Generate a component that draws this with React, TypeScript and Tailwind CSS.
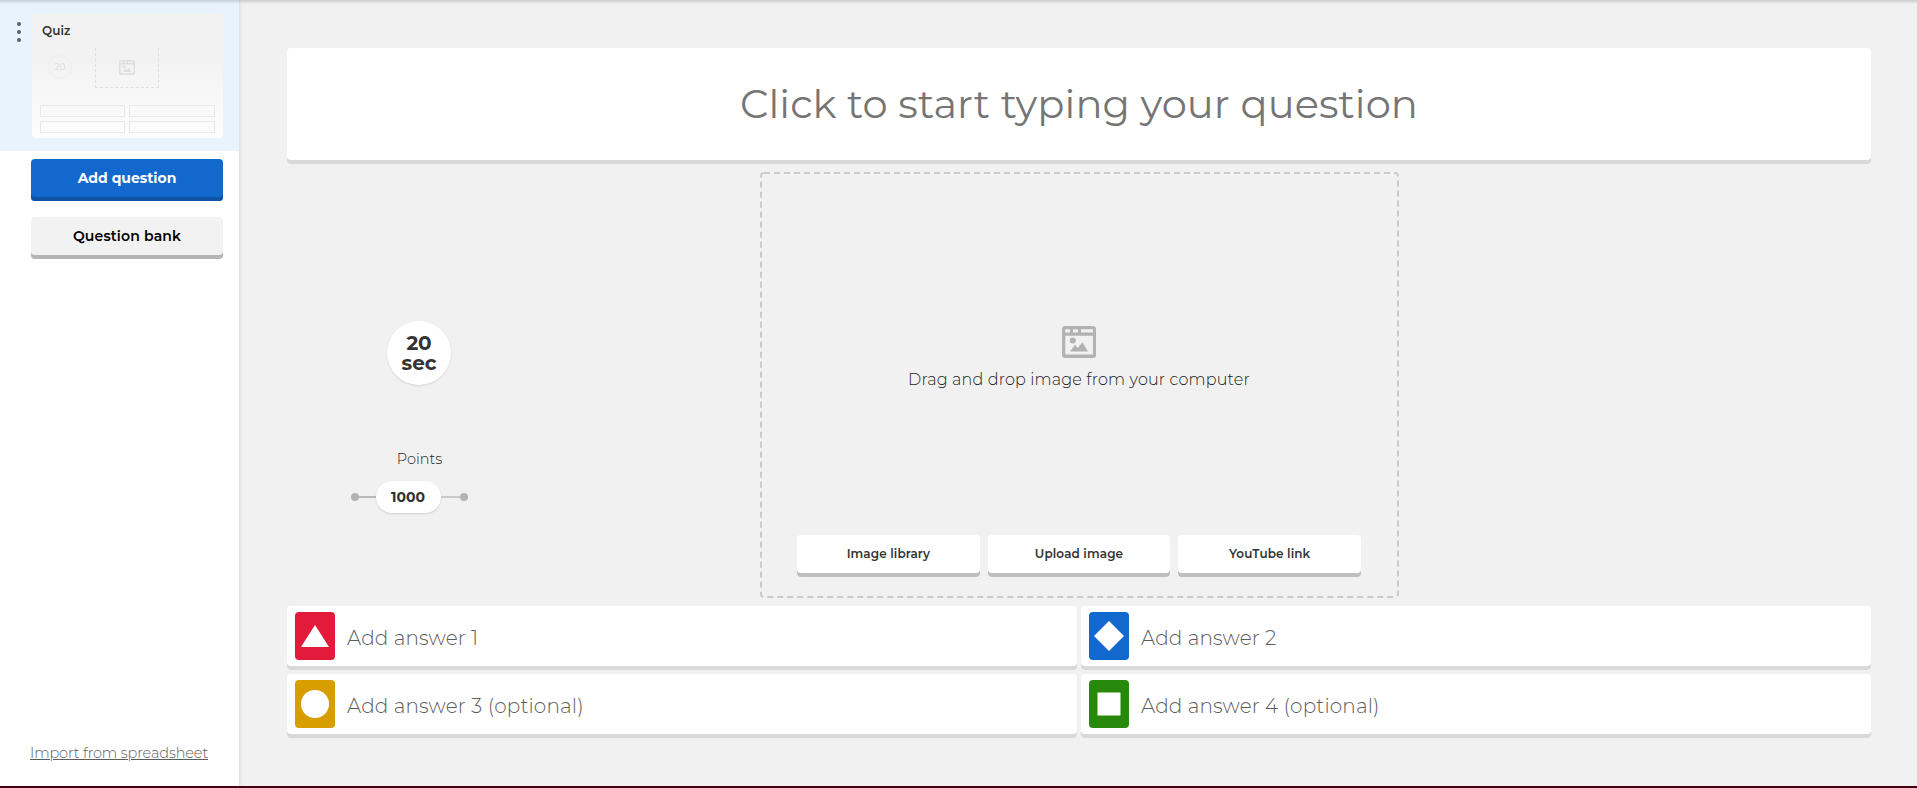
import React from 'react';

function DotsIcon() {
  return (
    <svg className="block h-[22px] w-[6px] fill-[#555f68]" viewBox="0 0 6 22">
      <circle cx="3" cy="3" r="2" />
      <circle cx="3" cy="11" r="2" />
      <circle cx="3" cy="19" r="2" />
    </svg>
  );
}

function ImageIcon({ className }: { className: string }) {
  return (
    <svg className={className} viewBox="0 0 34 32" fill="currentColor">
      <path
        fillRule="evenodd"
        d="M3 0H31Q34 0 34 3V29Q34 32 31 32H3Q0 32 0 29V3Q0 0 3 0ZM3.3 3.2V6.5H8V3.2ZM11 3.2V6.5H16V3.2ZM19 3.2V6.5H31V3.2ZM3.3 9.8V28.5H31V9.8Z"
      />
      <circle cx="10.8" cy="14.6" r="3" />
      <path d="M8 25.5L13 18.8L15.8 22L20.5 16.3L26 25.5Z" />
    </svg>
  );
}

function Thumbnail() {
  return (
    <div className="h-[125px] w-[191px] rounded bg-linear-to-b from-[#f2f2f2] from-35% to-[#fdfdfd] px-2">
      <div className="flex h-[35px] items-center pl-[2px] text-[12px] font-semibold text-[#333333]">
        <span className="tracking-[0.1px]">Quiz</span>
      </div>
      <div className="flex h-[40px]">
        <div className="mt-[7px] ml-2 flex size-[24px] items-center justify-center rounded-full border border-[#eeeeee] text-[9px] text-[#d9d9d9]">
          20
        </div>
        <div className="ml-[23px] flex w-[64px] justify-center border-x border-b border-dashed border-[#dedede]">
          <ImageIcon className="mt-[12px] h-[15px] w-4 text-[#dedede]" />
        </div>
      </div>
      <div className="mt-[17px] grid grid-cols-[85px_86px] gap-x-1 gap-y-1">
        {[0, 1, 2, 3].map((i) => (
          <div key={i} className="h-3 border border-[#e9e9e9]" />
        ))}
      </div>
    </div>
  );
}

function Sidebar() {
  return (
    <aside className="flex w-[240px] shrink-0 flex-col border-r border-[#e2e2e2] bg-white shadow-[1px_0_3px_rgba(0,0,0,0.06)]">
      <div className="flex h-[151px] bg-[#e9f3fd] pt-[13px]">
        <div className="mt-[8px] ml-4 w-4">
          <DotsIcon />
        </div>
        <Thumbnail />
      </div>
      <div className="flex flex-col gap-4 pt-2 pr-4 pl-[31px]">
        <button className="h-[42px] rounded bg-[#1368ce] pb-1 text-[14px] font-bold text-white shadow-[inset_0_-4px_0_#0f53a5]">
          Add question
        </button>
        <button className="h-[42px] rounded bg-[#f2f2f2] pb-1 text-[14px] font-semibold text-black shadow-[inset_0_-4px_0_#b5b5b5]">
          <span className="tracking-[0.15px]">Question bank</span>
        </button>
      </div>
      <div className="mt-auto mb-[23px] ml-[30px] text-[14.5px] leading-5 font-light text-[#5c5c5c]">
        <span className="tracking-[-0.13px] underline">Import from spreadsheet</span>
      </div>
    </aside>
  );
}

function Settings() {
  return (
    <div className="flex w-[473px] flex-col items-center pr-[209px]">
      <div className="mt-[149px] flex size-16 items-center justify-center rounded-full bg-white text-center text-[20px] leading-5 font-bold text-[#333333] shadow-[0_1px_2px_rgba(0,0,0,0.12)]">
        <div className="tracking-[-0.1px]">
          20
          <br />
          sec
        </div>
      </div>
      <div className="mt-[64px] ml-px text-[14.5px] leading-5 font-light text-[#222222]">
        <span>Points</span>
      </div>
      <div className="mt-[12px] mr-[20px] flex items-center">
        <span className="size-2 rounded-full bg-[#b2b2b2]" />
        <span className="h-[2px] w-[17px] bg-[#b9b9b9]" />
        <span className="flex h-8 w-[65px] items-center justify-center rounded-full bg-white text-[14px] font-bold text-[#333333] shadow-[0_1px_2px_rgba(0,0,0,0.15)]">
          1000
        </span>
        <span className="h-[2px] w-[19px] bg-[#c9c9c9]" />
        <span className="size-2 rounded-full bg-[#b2b2b2]" />
      </div>
    </div>
  );
}

function MediaDropZone() {
  return (
    <div className="flex h-[426px] w-[639px] flex-col items-center rounded pr-px">
      <svg className="-mr-px -mb-[426px] block h-[426px] w-[639px] shrink-0" viewBox="0 0 639 426" fill="none">
        <rect x="1" y="1" width="637" height="424" rx="3" stroke="#cacaca" strokeWidth="2" strokeDasharray="6 4" />
      </svg>
      <ImageIcon className="mt-[154px] h-8 w-[34px] shrink-0 text-[#b2b2b2]" />
      <div className="mt-[10px] text-[16px] leading-6 font-light text-[#222222]">
        <span className="tracking-[0.16px]">Drag and drop image from your computer</span>
      </div>
      <div className="mt-[143px] flex w-[564px] gap-2">
        {['Image library', 'Upload image', 'YouTube link'].map((label) => (
          <button
            key={label}
            className="h-[42px] flex-1 rounded bg-white pb-1 text-[12px] font-semibold text-[#333333] shadow-[inset_0_-4px_0_#bfbfbf]"
          >
            <span className="tracking-[0.12px]">{label}</span>
          </button>
        ))}
      </div>
    </div>
  );
}

const answers = [
  { label: 'Add answer 1', color: 'bg-[#e21b3c]', shape: <path d="M20 13L34 35H6Z" /> },
  { label: 'Add answer 2', color: 'bg-[#1368ce]', shape: <path d="M20 9L35 24L20 39L5 24Z" /> },
  { label: 'Add answer 3 (optional)', color: 'bg-[#d89e00]', shape: <circle cx="20" cy="24" r="14" /> },
  { label: 'Add answer 4 (optional)', color: 'bg-[#26890c]', shape: <path d="M8.5 12.5h23v23h-23Z" /> },
];

export default function App() {
  return (
    <div className="flex h-[788px] flex-col overflow-hidden bg-[#f1f1f1] font-['Montserrat','Inter',sans-serif]">
      <div className="z-10 -mb-1 h-1 shrink-0 bg-linear-to-b from-black/15 to-transparent" />
      <div className="flex min-h-0 flex-1">
        <Sidebar />
        <main className="flex flex-1 flex-col pt-12 pr-[46px] pl-[47px]">
          <div className="flex h-[116px] shrink-0 items-center justify-center rounded bg-white pb-1 text-[40px] font-normal text-[#757575] shadow-[inset_0_-4px_0_#d9d9d9]">
            <span className="tracking-[0.08px]">Click to start typing your question</span>
          </div>
          <div className="mt-2 flex">
            <Settings />
            <MediaDropZone />
          </div>
          <div className="mt-2 grid grid-cols-2 gap-1">
            {answers.map((a) => (
              <div
                key={a.label}
                className="flex h-16 items-center rounded bg-white pb-1 pl-2 shadow-[inset_0_-4px_0_#d9d9d9]"
              >
                <div className={`h-12 w-10 rounded ${a.color}`}>
                  <svg className="block h-12 w-10 fill-white" viewBox="0 0 40 48">
                    {a.shape}
                  </svg>
                </div>
                <div className="ml-3 pt-1 text-[20px] font-light text-[#5c5c5c]">
                  <span className="tracking-[0.14px]">{a.label}</span>
                </div>
              </div>
            ))}
          </div>
        </main>
      </div>
      <div className="h-[2px] shrink-0 bg-[#450015]" />
    </div>
  );
}
